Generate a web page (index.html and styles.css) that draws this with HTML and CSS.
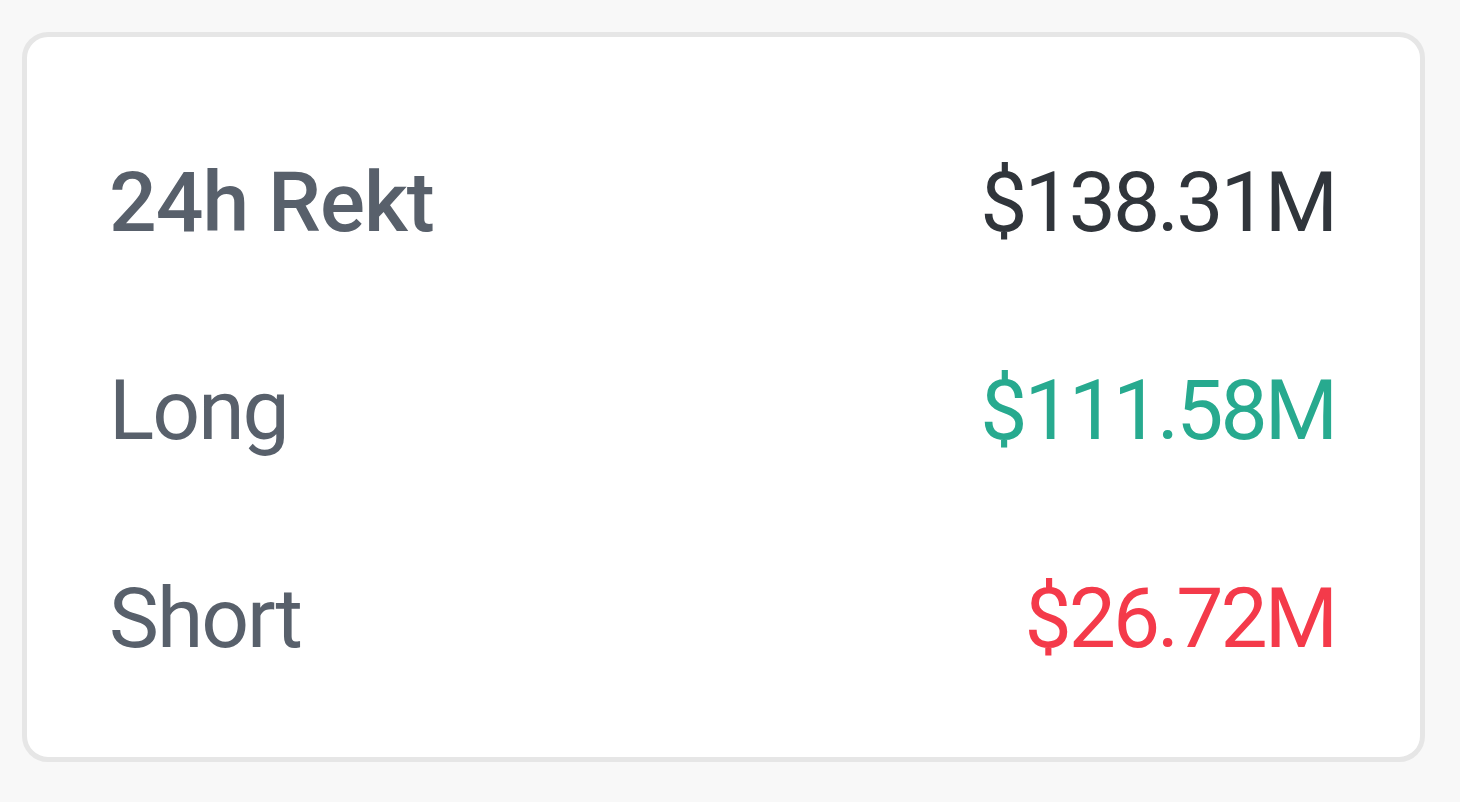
FILE: index.html
```html
<!DOCTYPE html>
<html>
<head>
<meta charset="utf-8">
<link rel="stylesheet" href="styles.css">
</head>
<body>
<div class="page">
  <div class="card">
    <div class="row">
      <span class="label label-bold">24h Rekt</span>
      <span class="value value-total">$138.31M</span>
    </div>
    <div class="row">
      <span class="label">Long</span>
      <span class="value value-long">$111.58M</span>
    </div>
    <div class="row">
      <span class="label">Short</span>
      <span class="value value-short">$26.72M</span>
    </div>
  </div>
</div>
</body>
</html>
```
FILE: styles.css
```css
html, body {
  margin: 0;
  padding: 0;
  background: #f8f8f8;
}
.page {
  width: 1460px;
  height: 802px;
  padding: 32px 35px 0 22px;
  box-sizing: border-box;
}
.card {
  box-sizing: border-box;
  width: 1403px;
  height: 730px;
  background: #ffffff;
  border: 5px solid #e6e6e6;
  border-radius: 26px;
  padding: 62px 84px 0 82px;
  font-family: Roboto, sans-serif;
}
.row {
  display: flex;
  justify-content: space-between;
  align-items: baseline;
  height: 208px;
  line-height: 208px;
  font-size: 84px;
}
.label {
  color: #58606b;
  font-weight: 400;
  letter-spacing: -2px;
}
.label-bold {
  font-weight: 500;
  letter-spacing: -1px;
}
.value {
  letter-spacing: -3px;
  margin-right: 1px;
}
.value-total { color: #30353b; }
.value-long { color: #27aa8f; }
.value-short { color: #f43a4a; }
```
